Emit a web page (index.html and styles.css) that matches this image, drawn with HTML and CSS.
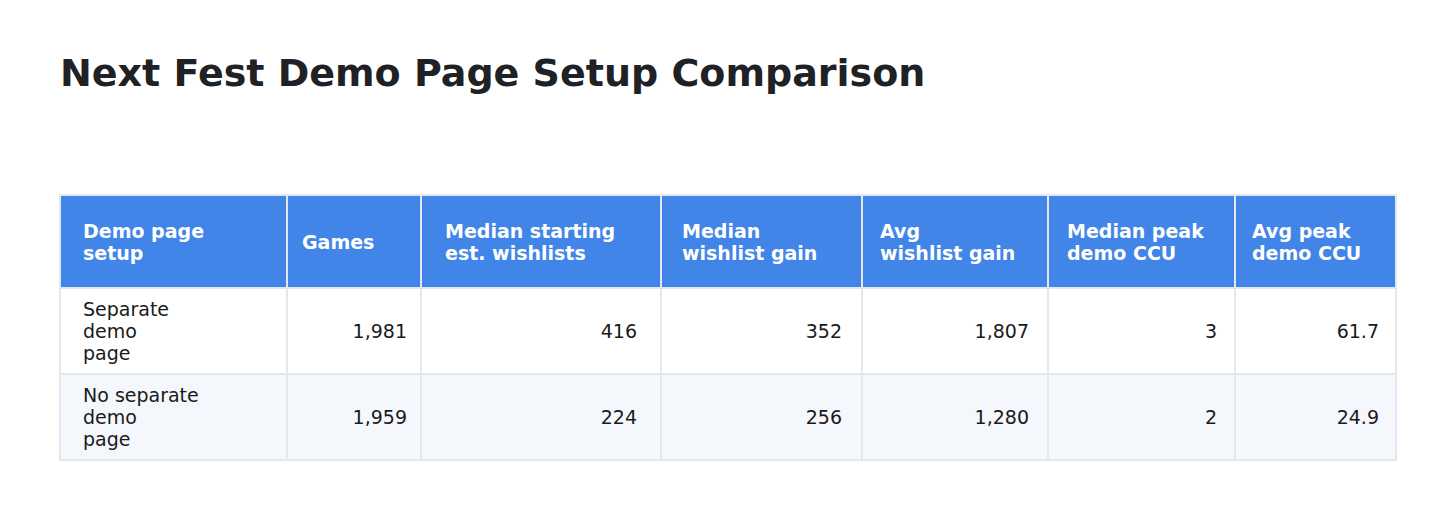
FILE: index.html
```html
<!DOCTYPE html>
<html lang="en">
<head>
<meta charset="utf-8">
<title>Next Fest Demo Page Setup Comparison</title>
<link rel="stylesheet" href="styles.css">
</head>
<body>
<main class="page">
  <h1 class="title">Next Fest Demo Page Setup Comparison</h1>
  <table class="grid">
    <colgroup>
      <col class="w1"><col class="w2"><col class="w3"><col class="w4"><col class="w5"><col class="w6"><col class="w7">
    </colgroup>
    <thead>
      <tr>
        <th class="c1">Demo page<br>setup</th>
        <th class="c2">Games</th>
        <th class="c3">Median starting<br>est. wishlists</th>
        <th class="c4">Median<br>wishlist gain</th>
        <th class="c5">Avg<br>wishlist gain</th>
        <th class="c6">Median peak<br>demo CCU</th>
        <th class="c7">Avg peak<br>demo CCU</th>
      </tr>
    </thead>
    <tbody>
      <tr>
        <td class="c1">Separate<br>demo<br>page</td>
        <td class="c2 num">1,981</td>
        <td class="c3 num">416</td>
        <td class="c4 num">352</td>
        <td class="c5 num">1,807</td>
        <td class="c6 num">3</td>
        <td class="c7 num">61.7</td>
      </tr>
      <tr class="alt">
        <td class="c1">No separate<br>demo<br>page</td>
        <td class="c2 num">1,959</td>
        <td class="c3 num">224</td>
        <td class="c4 num">256</td>
        <td class="c5 num">1,280</td>
        <td class="c6 num">2</td>
        <td class="c7 num">24.9</td>
      </tr>
    </tbody>
  </table>
</main>
</body>
</html>
```

FILE: styles.css
```css
html, body {
  margin: 0;
  padding: 0;
  background: #ffffff;
}
body {
  font-family: "DejaVu Sans", Verdana, sans-serif;
  color: #1a1a1a;
}
.page {
  padding: 50px 60px 0 60px;
}
.title {
  margin: 0;
  font-size: 38px;
  font-weight: bold;
  color: #202124;
  line-height: 46px;
}
.grid {
  margin-top: 98px;
  margin-left: -1px;
  width: 1336px;
  border-collapse: collapse;
  table-layout: fixed;
  font-size: 19px;
  line-height: 22px;
}
.w1 { width: 227px; }
.w2 { width: 134px; }
.w3 { width: 240px; }
.w4 { width: 201px; }
.w5 { width: 186px; }
.w6 { width: 187px; }
.w7 { width: 161px; }
.grid th {
  background: #4285e8;
  color: #ffffff;
  font-weight: bold;
  text-align: left;
  vertical-align: middle;
  padding-top: 24px;
  padding-bottom: 23px;
  border: 2px solid #e3e8ef;
}
.grid td {
  padding-top: 9px;
  padding-bottom: 9px;
  border: 2px solid #e3e8ef;
  vertical-align: middle;
  background: #ffffff;
  color: #1a1a1a;
}
.grid tr.alt td {
  background: #f4f7fc;
}
.num { text-align: right; }
.c1 { padding-left: 22px; padding-right: 22px; }
.c2 { padding-left: 14px; padding-right: 13px; }
.c3 { padding-left: 23px; padding-right: 23px; }
.c4 { padding-left: 20px; padding-right: 19px; }
.c5 { padding-left: 17px; padding-right: 18px; }
.c6 { padding-left: 18px; padding-right: 17px; }
.c7 { padding-left: 16px; padding-right: 16px; }
```
